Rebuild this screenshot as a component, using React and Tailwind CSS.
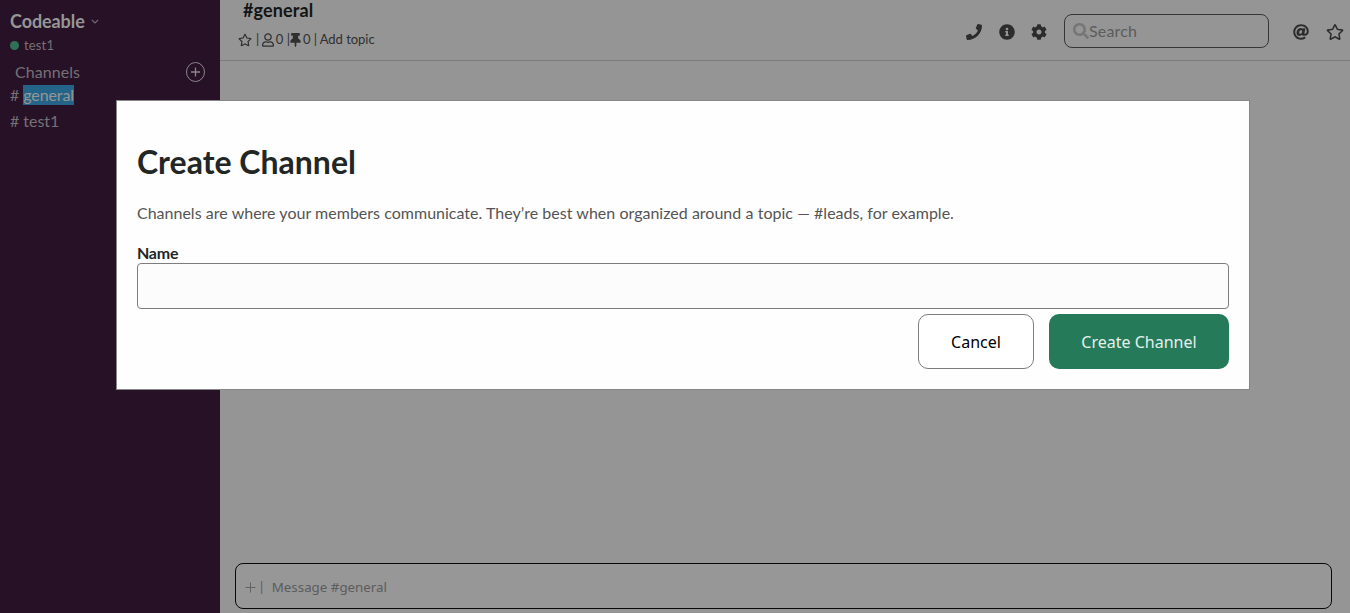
import {
  FaPhone, FaInfoCircle, FaCog, FaSearch, FaAt, FaRegStar, FaRegUser, FaThumbtack,
} from "react-icons/fa";

function Sidebar() {
  return (
    <aside className="flex w-[220px] shrink-0 flex-col bg-[#271126] text-[#767076]">
      <div className="mt-[10px] flex h-[23px] items-center pl-[10px]">
        <h1 className="text-[18px] leading-[23px] font-bold tracking-[-0.08px] text-[#969696]">Codeable</h1>
        <svg className="ml-[6px] h-[5px] w-[8px]" viewBox="0 0 8 5" fill="none" stroke="#767076" strokeWidth="1.1">
          <path d="M.8.8 4 4 7.2.8" />
        </svg>
      </div>
      <div className="mt-[4px] flex h-[17px] items-center pl-[10px] text-[13px] tracking-[0.15px]">
        <span className="mr-[5px] size-[9px] rounded-full bg-[#2f7157]" />
        test1
      </div>
      <div className="mt-[8px] flex h-[20px] items-center justify-between pr-[15px] pl-[15px] text-base tracking-[0.05px]">
        Channels
        <svg className="h-[20px] w-[19px]" viewBox="0 0 19 20" fill="none" stroke="#8b858b">
          <ellipse cx="9.5" cy="10" rx="9" ry="9.5" strokeWidth="1" />
          <path d="M9.5 5.5v9M5 10h9" strokeWidth="1.3" />
        </svg>
      </div>
      <div className="mt-[3px] flex h-[20px] items-center gap-[4px] pl-[10px] text-base leading-5">
        <span>#</span>
        <span className="bg-[#246489] tracking-[-0.12px] text-[#969696]">general</span>
      </div>
      <div className="mt-[6px] flex h-[20px] items-center gap-[4px] pl-[10px] text-base leading-5">
        <span>#</span>
        <span>test1</span>
      </div>
    </aside>
  );
}

function Header() {
  return (
    <header className="flex h-[61px] shrink-0 border-b border-[#7c7c7c] text-[#2c2c2c]">
      <div className="flex-1 pl-[18px]">
        <h2 className="h-[22px] pl-[5px] text-[18px] leading-[20px] font-bold tracking-[0.12px] text-[#131515]">#general</h2>
        <div className="mt-[9px] flex h-[17px] items-center text-[13px] whitespace-pre text-[#303030]">
          <FaRegStar className="h-[14px] w-[14px]" />
          <span className="ml-[4px]">|</span>
          <FaRegUser className="ml-[2.5px] h-[14px] w-[12px]" />
          <span className="ml-[2px]">0 |</span>
          <FaThumbtack className="h-[14px] w-[11px]" />
          <span className="ml-[2px] tracking-[-0.04px]">0 | Add topic</span>
        </div>
      </div>
      <div className="flex h-[61px] shrink-0 items-center pt-[1px] pr-[6px]">
        <FaPhone className="mt-[1px] size-4" />
        <FaInfoCircle className="mt-[1px] ml-[17px] size-4" />
        <FaCog className="mt-[1px] ml-[16px] size-4" />
        <div className="ml-[17px] flex h-[34px] w-[205px] items-center rounded-[8px] border border-[#363636] pl-[8px] text-base text-[#5c5c5c]">
          <FaSearch className="size-4 text-[#767676]" />
          <span className="tracking-[0.15px]">Search</span>
        </div>
        <FaAt className="mt-[1px] ml-[24px] size-4" />
        <FaRegStar className="mt-[1px] ml-[17px] size-[18px]" />
      </div>
    </header>
  );
}

function CreateChannelModal() {
  return (
    <div className="absolute top-[100px] left-[116px] flex h-[290px] w-[1134px] flex-col border border-[#878787] bg-[#fefefe] px-[20px] pt-[40px]">
      <h2 className="text-[32px] leading-[42px] font-bold text-[#222625]">Create Channel</h2>
      <p className="mt-[20px] text-base leading-[20px] text-[#545454] [word-spacing:0.15px]">
        Channels are where your members communicate. They’re best when organized around a topic — #leads, for example.
      </p>
      <label className="mt-[20px] text-base leading-[20px] font-bold tracking-[-0.25px] text-[#222625]">Name</label>
      <input className="h-[46px] w-full shrink-0 rounded-[4px] border border-[#7d7d7d] bg-[#fcfcfc]" />
      <div className="mt-[5px] flex justify-end gap-[15px] font-['Noto_Sans',sans-serif] text-base">
        <button className="h-[55px] w-[116px] rounded-[10px] border border-[#7d7d7d] bg-white text-black">Cancel</button>
        <button className="h-[55px] w-[180px] rounded-[10px] bg-[#257a5a] text-[#e4f0eb]">Create Channel</button>
      </div>
    </div>
  );
}

export default function App() {
  return (
    <div className="relative flex h-[613px] w-[1350px] overflow-hidden bg-[#959595] font-['Lato',sans-serif]">
      <Sidebar />
      <main className="flex min-w-0 flex-1 flex-col">
        <Header />
        <div className="flex-1" />
        <div className="mr-[18px] mb-[4px] ml-[15px] flex h-[46px] items-center rounded-[8px] border border-[#080808] bg-[#979797] pt-[2px] pl-[9px] text-[#5c5c5c]">
          <svg className="size-[11px]" viewBox="0 0 11 11" stroke="#626262" strokeWidth="1">
            <path d="M5.5.5v10M.5 5.5h10" />
          </svg>
          <span className="mt-[2px] ml-[4px] text-[13px]">|</span>
          <span className="mt-[1px] ml-[8.5px] font-['Noto_Sans',sans-serif] text-[13.33px]">Message #general</span>
        </div>
      </main>
      <CreateChannelModal />
    </div>
  );
}
